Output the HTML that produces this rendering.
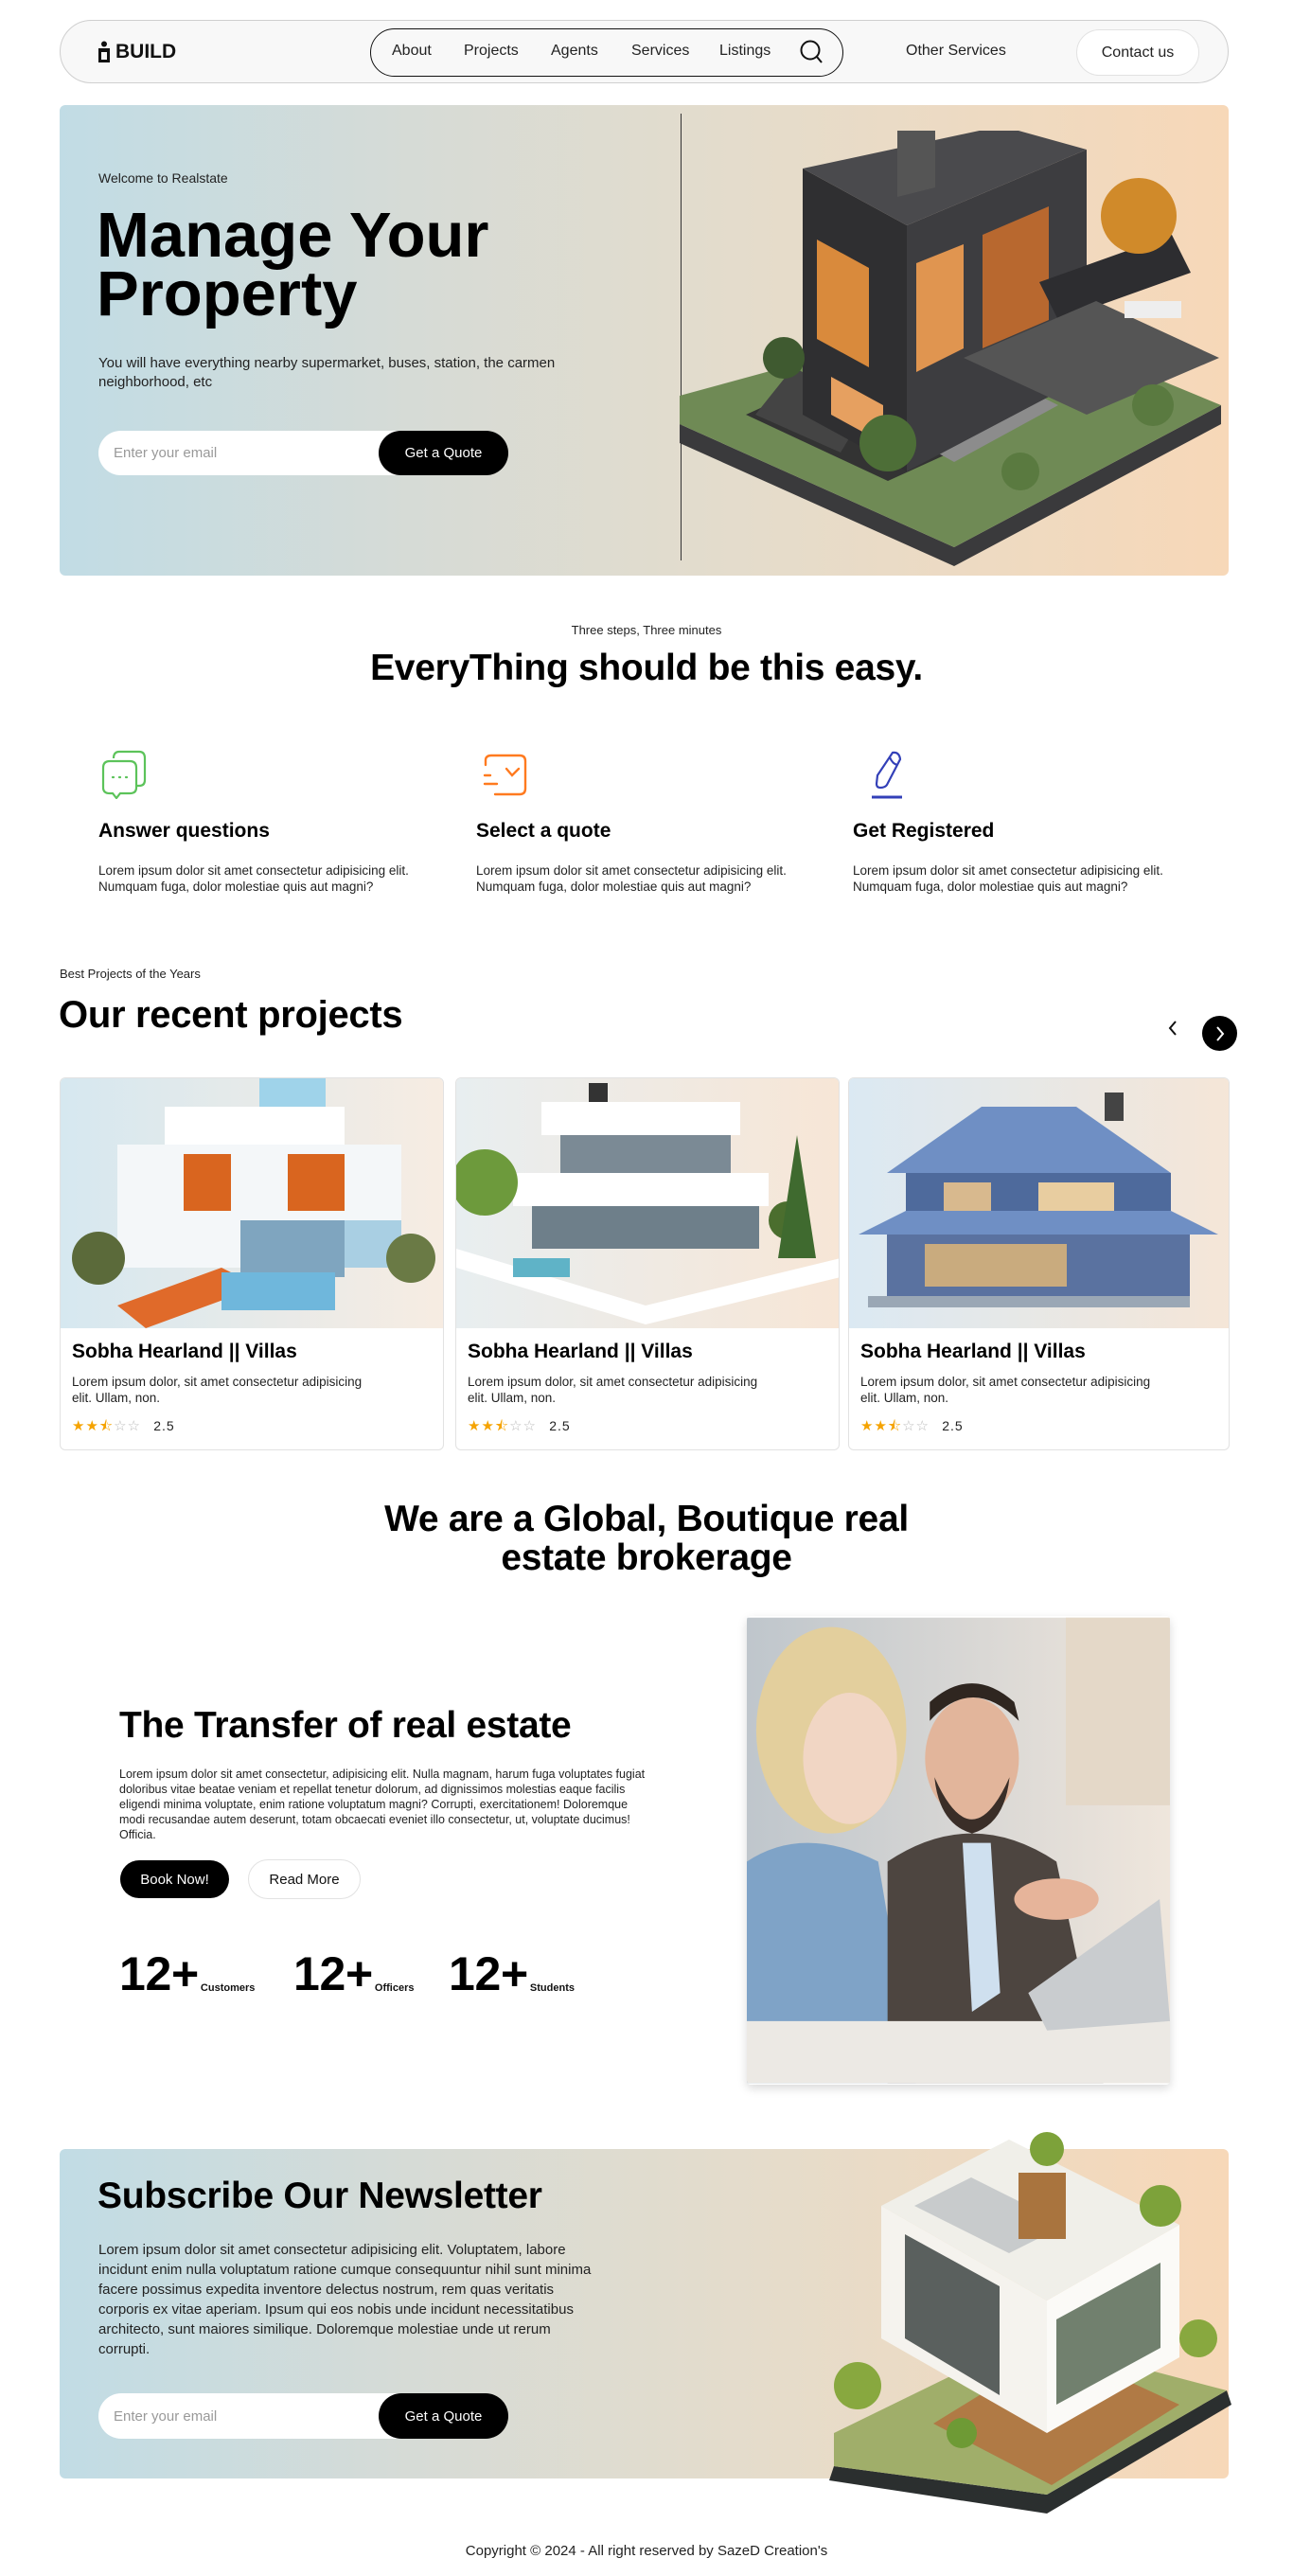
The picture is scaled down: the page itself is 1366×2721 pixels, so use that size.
<!DOCTYPE html>
<html><head><meta charset="utf-8">
<style>
*{margin:0;padding:0;box-sizing:border-box}
body{width:1366px;height:2721px;background:#fff;font-family:"Liberation Sans",sans-serif;color:#111;position:relative;overflow:hidden}
.a{position:absolute}
.grad{background:linear-gradient(90deg,#c1dce5 0%,#d6dbd6 30%,#e5dccb 60%,#f7d8b8 100%)}
.b{font-weight:700;color:#000;letter-spacing:-0.3px}
.inp{background:#fff;border-radius:24px;color:#999;font-size:15px;padding-left:16px;display:flex;align-items:center}
.btn{background:#000;color:#fff;border-radius:24px;font-size:15px;display:flex;align-items:center;justify-content:center}
.card{border:1px solid #e2e2e2;border-radius:6px;overflow:hidden;background:#fff}
.ct{font-size:21px;font-weight:700;color:#000}
.cp{font-size:13.5px;line-height:17px;color:#222}
.st{color:#f5a300;font-size:15px;letter-spacing:1px}
.st i{color:#bbb;font-style:normal}
</style></head><body>

<!-- NAV -->
<div class="a" style="left:63px;top:21px;width:1235px;height:67px;border:1px solid #cfcfcf;background:#f8f8f8;border-radius:34px"></div>
<div class="a" style="left:103px;top:43px;font-size:21px;font-weight:700;color:#111;display:flex;align-items:center">
<svg width="14" height="24" viewBox="0 0 14 24" style="margin-right:5px"><circle cx="7" cy="3.5" r="3" fill="#111"/><rect x="1" y="8" width="12" height="15" fill="#111"/><rect x="4" y="12" width="6" height="8" fill="#f8f8f8"/></svg>BUILD</div>
<div class="a" style="left:391px;top:30px;width:500px;height:51px;border:1.5px solid #111;border-radius:26px"></div>
<div class="a" style="left:414px;top:45px;font-size:16px;color:#222">
<span style="position:absolute;left:0">About</span><span style="position:absolute;left:76px">Projects</span><span style="position:absolute;left:168px">Agents</span><span style="position:absolute;left:253px">Services</span><span style="position:absolute;left:346px">Listings</span></div>
<svg class="a" style="left:844px;top:41px" width="26" height="28" viewBox="0 0 26 28"><circle cx="12" cy="12" r="9.5" fill="none" stroke="#111" stroke-width="2"/><line x1="19" y1="19" x2="24" y2="25" stroke="#111" stroke-width="2"/></svg>
<div class="a" style="left:957px;top:45px;font-size:16px;color:#222">Other Services</div>
<div class="a" style="left:1137px;top:31px;width:130px;height:49px;border:1px solid #e2e2e2;border-radius:26px;background:#fff;font-size:16px;display:flex;align-items:center;justify-content:center;color:#222">Contact us</div>

<!-- HERO -->
<div class="a grad" style="left:63px;top:111px;width:1235px;height:497px;border-radius:6px"></div>
<div class="a" style="left:719px;top:120px;width:1px;height:472px;background:#333"></div>
<div class="a" style="left:104px;top:180px;font-size:14px;color:#222">Welcome to Realstate</div>
<div class="a b" style="left:102px;top:218px;font-size:67px;line-height:62px;letter-spacing:0">Manage Your<br>Property</div>
<div class="a" style="left:104px;top:374px;font-size:15px;line-height:20px;color:#222;width:560px">You will have everything nearby supermarket, buses, station, the carmen neighborhood, etc</div>
<div class="a inp" style="left:104px;top:455px;width:340px;height:47px">Enter your email</div>
<div class="a btn" style="left:400px;top:455px;width:137px;height:47px">Get a Quote</div>
<svg class="a" style="left:718px;top:138px" width="575" height="462" viewBox="0 0 575 462">
<polygon points="0,330 290,460 572,310 572,290 290,440 0,310" fill="#3a3a3c"/>
<polygon points="0,310 290,440 572,290 330,190 0,280" fill="#6f8a55"/>
<polygon points="70,300 220,370 330,320 180,250" fill="#333"/>
<polygon points="80,300 120,250 200,290 170,340" fill="#444"/>
<polygon points="200,300 290,350 400,290 320,250" fill="#8c8c8c"/>
<polygon points="130,40 130,300 240,360 240,100" fill="#2f2f31"/>
<polygon points="240,100 240,360 430,260 430,20" fill="#3d3d40"/>
<polygon points="240,100 430,20 340,-5 130,40" fill="#4a4a4d"/>
<polygon points="230,0 270,-5 270,60 230,70" fill="#555"/>
<polygon points="145,115 200,145 200,250 145,220" fill="#d98a3c"/>
<polygon points="250,140 300,120 300,230 250,255" fill="#e09550"/>
<polygon points="320,110 390,80 390,200 320,230" fill="#b8682f"/>
<polygon points="160,260 215,290 215,330 160,300" fill="#e6a060"/>
<polygon points="330,240 400,280 460,250 390,215" fill="#2a2a2a"/>
<polygon points="380,160 520,110 540,150 400,200" fill="#2d2d30"/>
<polygon points="300,240 440,180 570,240 430,300" fill="#555"/>
<rect x="470" y="180" width="60" height="18" fill="#eee"/>
<circle cx="485" cy="90" r="40" fill="#d08a2a"/>
<circle cx="110" cy="240" r="22" fill="#3f5a30"/>
<circle cx="220" cy="330" r="30" fill="#4d6e37"/>
<circle cx="500" cy="290" r="22" fill="#5a7a40"/>
<circle cx="360" cy="360" r="20" fill="#5a7a40"/>
</svg>

<!-- STEPS -->
<div class="a" style="left:0;width:1366px;top:658px;text-align:center;font-size:13px;color:#222">Three steps, Three minutes</div>
<div class="a b" style="left:0;width:1366px;top:684px;text-align:center;font-size:39px">EveryThing should be this easy.</div>
<svg class="a" style="left:106px;top:792px" width="52" height="52" viewBox="0 0 52 52" fill="none" stroke="#5cc35a" stroke-width="2.2"><path d="M14 9 Q14 2 20 2 H41 Q47 2 47 9 V32 Q47 38 41 38 H39"/><path d="M3 19 Q3 12 10 12 H31 Q38 12 38 19 V40 Q38 46 31 46 H21 L17 51 L13 46 H10 Q3 46 3 40 Z"/><path d="M13 29h1M20 29h1M27 29h1" stroke-linecap="round"/></svg>
<svg class="a" style="left:509px;top:796px" width="50" height="46" viewBox="0 0 50 46" fill="none" stroke="#ff7a1f" stroke-width="2.4" stroke-linecap="round"><path d="M4 12 V7 Q4 2 10 2 H40 Q46 2 46 8 V37 Q46 43 40 43 H14"/><path d="M26 16 L32 23 L39 16"/><path d="M3 23h6M3 32h13"/></svg>
<svg class="a" style="left:913px;top:792px" width="50" height="52" viewBox="0 0 50 52" fill="none" stroke="#3340b8" stroke-width="2.2"><path d="M30 3 Q37 2 38 10 L24 37 Q22 40 17 40 Q13 40 13 36 L14 27 Z"/><path d="M27 8 Q30 15 35 16"/><path d="M8 50 H40" stroke-width="3"/></svg>
<div class="a ct" style="left:104px;top:866px">Answer questions</div>
<div class="a ct" style="left:503px;top:866px">Select a quote</div>
<div class="a ct" style="left:901px;top:866px">Get Registered</div>
<div class="a cp" style="left:104px;top:911px;width:345px">Lorem ipsum dolor sit amet consectetur adipisicing elit. Numquam fuga, dolor molestiae quis aut magni?</div>
<div class="a cp" style="left:503px;top:911px;width:345px">Lorem ipsum dolor sit amet consectetur adipisicing elit. Numquam fuga, dolor molestiae quis aut magni?</div>
<div class="a cp" style="left:901px;top:911px;width:345px">Lorem ipsum dolor sit amet consectetur adipisicing elit. Numquam fuga, dolor molestiae quis aut magni?</div>

<!-- PROJECTS -->
<div class="a" style="left:63px;top:1021px;font-size:13px;color:#222">Best Projects of the Years</div>
<div class="a b" style="left:62px;top:1050px;font-size:40px">Our recent projects</div>
<svg class="a" style="left:1232px;top:1076px" width="14" height="20" viewBox="0 0 14 20"><path d="M10 3 L4 10 L10 17" fill="none" stroke="#111" stroke-width="2"/></svg>
<div class="a" style="left:1270px;top:1073px;width:37px;height:37px;border-radius:50%;background:#000"></div>
<svg class="a" style="left:1282px;top:1082px" width="14" height="20" viewBox="0 0 14 20"><path d="M4 3 L10 10 L4 17" fill="none" stroke="#fff" stroke-width="2"/></svg>

<div class="a card" style="left:63px;top:1138px;width:406px;height:394px">
<svg width="406" height="264" viewBox="0 0 406 264"><defs><linearGradient id="g1" x1="0" x2="1"><stop offset="0" stop-color="#d6e8f0"/><stop offset="1" stop-color="#f7ece2"/></linearGradient></defs><rect width="406" height="264" fill="url(#g1)"/>
<rect x="110" y="30" width="190" height="40" fill="#fff"/><rect x="210" y="0" width="70" height="30" fill="#9fd3ea"/><rect x="60" y="70" width="300" height="130" fill="#f4f7f9"/><rect x="130" y="80" width="50" height="60" fill="#d9651f"/><rect x="240" y="80" width="60" height="60" fill="#d9651f"/><rect x="190" y="150" width="110" height="60" fill="#7fa5bf"/><rect x="300" y="150" width="60" height="50" fill="#a9cfe3"/><polygon points="60,240 170,200 210,220 90,264" fill="#e06a2a"/><rect x="170" y="205" width="120" height="40" fill="#6fb7dc"/><circle cx="40" cy="190" r="28" fill="#5b6a3a"/><circle cx="370" cy="190" r="26" fill="#6a7a45"/></svg>
<div class="ct" style="position:absolute;left:12px;top:277px">Sobha Hearland || Villas</div>
<div class="cp" style="position:absolute;left:12px;top:312px;width:325px">Lorem ipsum dolor, sit amet consectetur adipisicing elit. Ullam, non.</div>
<div class="st" style="position:absolute;left:12px;top:357px">★★⯪<i>☆☆</i> <span style="color:#222;font-size:14px;margin-left:8px">2.5</span></div></div>

<div class="a card" style="left:481px;top:1138px;width:406px;height:394px">
<svg width="406" height="264" viewBox="0 0 406 264"><defs><linearGradient id="g2" x1="0" x2="1"><stop offset="0" stop-color="#e8eef0"/><stop offset="1" stop-color="#f7e6d6"/></linearGradient></defs><rect width="406" height="264" fill="url(#g2)"/>
<rect x="140" y="5" width="20" height="20" fill="#333"/><rect x="90" y="25" width="210" height="35" fill="#fff"/><rect x="110" y="60" width="180" height="40" fill="#7b8a95"/><rect x="60" y="100" width="270" height="35" fill="#fff"/><rect x="80" y="135" width="240" height="45" fill="#6e7f8a"/><polygon points="0,180 200,240 406,190 406,210 200,260 0,200" fill="#fff"/><rect x="60" y="190" width="60" height="20" fill="#5fb3c7"/><circle cx="30" cy="110" r="35" fill="#6d9a3c"/><circle cx="350" cy="150" r="20" fill="#4b6e2e"/><polygon points="360,60 340,190 380,190" fill="#3f6a2f"/></svg>
<div class="ct" style="position:absolute;left:12px;top:277px">Sobha Hearland || Villas</div>
<div class="cp" style="position:absolute;left:12px;top:312px;width:325px">Lorem ipsum dolor, sit amet consectetur adipisicing elit. Ullam, non.</div>
<div class="st" style="position:absolute;left:12px;top:357px">★★⯪<i>☆☆</i> <span style="color:#222;font-size:14px;margin-left:8px">2.5</span></div></div>

<div class="a card" style="left:896px;top:1138px;width:403px;height:394px">
<svg width="403" height="264" viewBox="0 0 403 264"><defs><linearGradient id="g3" x1="0" x2="1"><stop offset="0" stop-color="#dbe9f3"/><stop offset="1" stop-color="#f5e6d7"/></linearGradient></defs><rect width="403" height="264" fill="url(#g3)"/>
<polygon points="40,100 140,30 240,30 340,100" fill="#6f8fc4"/><rect x="270" y="15" width="20" height="30" fill="#444"/><rect x="60" y="100" width="280" height="65" fill="#4e6a9c"/><rect x="100" y="110" width="50" height="40" fill="#d8b98e"/><rect x="200" y="110" width="80" height="40" fill="#e8cda0"/><polygon points="10,165 60,140 340,140 390,165" fill="#6f8fc4"/><rect x="40" y="165" width="320" height="65" fill="#5a72a0"/><rect x="80" y="175" width="150" height="45" fill="#c9ab7e"/><rect x="20" y="230" width="340" height="12" fill="#9aa7b5"/></svg>
<div class="ct" style="position:absolute;left:12px;top:277px">Sobha Hearland || Villas</div>
<div class="cp" style="position:absolute;left:12px;top:312px;width:325px">Lorem ipsum dolor, sit amet consectetur adipisicing elit. Ullam, non.</div>
<div class="st" style="position:absolute;left:12px;top:357px">★★⯪<i>☆☆</i> <span style="color:#222;font-size:14px;margin-left:8px">2.5</span></div></div>

<!-- GLOBAL -->
<div class="a b" style="left:0;width:1366px;top:1584px;text-align:center;font-size:39px;line-height:41px">We are a Global, Boutique real<br>estate brokerage</div>
<div class="a b" style="left:126px;top:1801px;font-size:39px">The Transfer of real estate</div>
<div class="a" style="left:126px;top:1866px;width:560px;font-size:12.5px;line-height:16px;color:#222">Lorem ipsum dolor sit amet consectetur, adipisicing elit. Nulla magnam, harum fuga voluptates fugiat doloribus vitae beatae veniam et repellat tenetur dolorum, ad dignissimos molestias eaque facilis eligendi minima voluptate, enim ratione voluptatum magni? Corrupti, exercitationem! Doloremque modi recusandae autem deserunt, totam obcaecati eveniet illo consectetur, ut, voluptate ducimus! Officia.</div>
<div class="a btn" style="left:127px;top:1965px;width:115px;height:40px;font-size:15px">Book Now!</div>
<div class="a" style="left:262px;top:1964px;width:119px;height:42px;border:1px solid #e2e2e2;border-radius:22px;font-size:15px;display:flex;align-items:center;justify-content:center">Read More</div>
<div class="a" style="left:126px;top:2060px;display:flex;align-items:flex-end"><span class="b" style="font-size:50px;line-height:50px">12+</span><span style="font-size:11px;font-weight:700;margin-left:2px;margin-bottom:4px">Customers</span></div>
<div class="a" style="left:310px;top:2060px;display:flex;align-items:flex-end"><span class="b" style="font-size:50px;line-height:50px">12+</span><span style="font-size:11px;font-weight:700;margin-left:2px;margin-bottom:4px">Officers</span></div>
<div class="a" style="left:474px;top:2060px;display:flex;align-items:flex-end"><span class="b" style="font-size:50px;line-height:50px">12+</span><span style="font-size:11px;font-weight:700;margin-left:2px;margin-bottom:4px">Students</span></div>
<svg class="a" style="left:789px;top:1707px;border-radius:4px;box-shadow:0 4px 10px rgba(0,0,0,.15)" width="447" height="495" viewBox="0 0 451 496">
<defs><linearGradient id="bg" x1="0" x2="1"><stop offset="0" stop-color="#bfc6cc"/><stop offset="1" stop-color="#efe6dc"/></linearGradient></defs>
<rect width="451" height="496" fill="url(#bg)"/><rect x="340" y="0" width="111" height="200" fill="#e4d8c8"/>
<ellipse cx="90" cy="120" rx="80" ry="110" fill="#e3cf9d"/><ellipse cx="110" cy="150" rx="50" ry="70" fill="#f1d6c4"/>
<path d="M0 260 Q60 220 140 260 L180 496 H0 Z" fill="#7fa3c7"/>
<ellipse cx="240" cy="150" rx="50" ry="65" fill="#e2b59b"/><path d="M200 170 Q240 260 280 170 Q275 220 240 230 Q205 220 200 170Z" fill="#3a2e28"/><path d="M195 110 Q240 60 290 110 L285 90 Q240 50 195 90Z" fill="#2f2620"/>
<path d="M150 260 Q240 200 330 260 L380 496 H150 Z" fill="#4d4540"/><path d="M230 240 L260 240 L270 400 L240 420 Z" fill="#cfe0ef"/>
<rect x="0" y="430" width="451" height="66" fill="#ece9e4"/><polygon points="300,400 440,300 451,430 320,440" fill="#c9cccf"/>
<ellipse cx="330" cy="300" rx="45" ry="22" fill="#e6b49a"/></svg>

<!-- NEWSLETTER -->
<div class="a grad" style="left:63px;top:2270px;width:1235px;height:348px;border-radius:6px"></div>
<div class="a b" style="left:103px;top:2298px;font-size:39px">Subscribe Our Newsletter</div>
<div class="a" style="left:104px;top:2366px;width:530px;font-size:15px;line-height:21px;color:#222">Lorem ipsum dolor sit amet consectetur adipisicing elit. Voluptatem, labore incidunt enim nulla voluptatum ratione cumque consequuntur nihil sunt minima facere possimus expedita inventore delectus nostrum, rem quas veritatis corporis ex vitae aperiam. Ipsum qui eos nobis unde incidunt necessitatibus architecto, sunt maiores similique. Doloremque molestiae unde ut rerum corrupti.</div>
<div class="a inp" style="left:104px;top:2528px;width:340px;height:48px">Enter your email</div>
<div class="a btn" style="left:400px;top:2528px;width:137px;height:48px">Get a Quote</div>
<svg class="a" style="left:866px;top:2240px" width="440" height="420" viewBox="0 0 440 420">
<polygon points="10,380 240,415 435,300 430,285 240,395 15,365" fill="#2b2f2f"/>
<polygon points="15,365 240,395 430,285 220,230 15,330" fill="#a0ae6a"/>
<polygon points="120,320 245,385 380,300 250,240" fill="#b07a45"/>
<polygon points="65,90 65,230 240,330 240,190" fill="#f5f3ee"/>
<polygon points="240,190 240,330 380,250 380,110" fill="#fbfaf7"/>
<polygon points="65,90 240,190 380,110 200,20" fill="#f0efe9"/>
<polygon points="90,120 190,175 190,290 90,230" fill="#5a605e"/><polygon points="250,210 360,150 360,240 250,300" fill="#71806e"/>
<polygon points="100,90 200,140 260,110 160,60" fill="#c8cbcc"/><rect x="210" y="55" width="50" height="70" fill="#a9743e"/>
<circle cx="240" cy="30" r="18" fill="#7da23a"/><circle cx="360" cy="90" r="22" fill="#7da23a"/><circle cx="40" cy="280" r="25" fill="#88a83f"/><circle cx="400" cy="230" r="20" fill="#88a83f"/><circle cx="150" cy="330" r="16" fill="#6e9a35"/></svg>

<div class="a" style="left:0;width:1366px;top:2686px;text-align:center;font-size:15px;color:#222">Copyright © 2024 - All right reserved by SazeD Creation's</div>
</body></html>
